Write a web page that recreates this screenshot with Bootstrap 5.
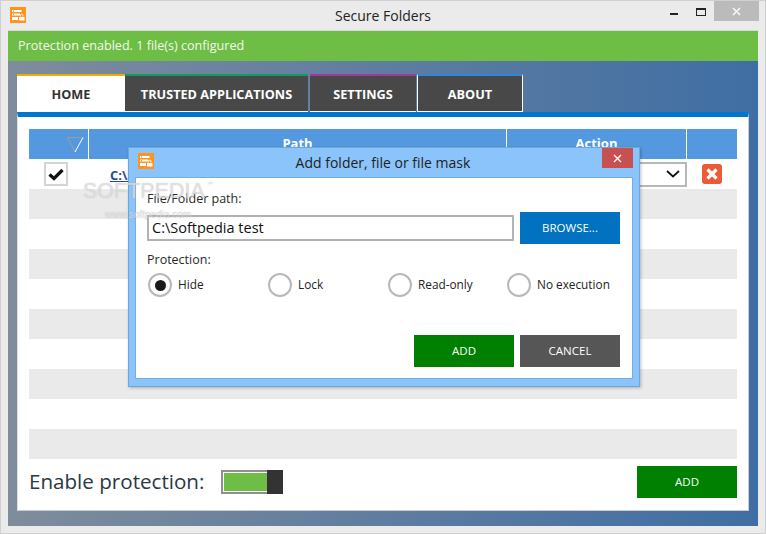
<!DOCTYPE html>
<html lang="en">
<head>
<meta charset="utf-8">
<title>Secure Folders</title>
<link href="https://cdn.jsdelivr.net/npm/bootstrap@5.3.0/dist/css/bootstrap.min.css" rel="stylesheet">
<style>
html,body{margin:0;padding:0;width:766px;height:534px;overflow:hidden;background:#ebebeb;}
body{font-family:"Open Sans","Noto Sans",sans-serif;color:#222;}
.app-window{position:relative;width:766px;height:534px;background:#ebebeb;border:1px solid #d0d0d0;}
.title-row{height:29px;position:relative;padding:6px 0 0 9px;}
.app-logo{width:16px;height:16px;display:block;}
.win-title{position:absolute;left:0;right:0;top:5px;text-align:center;font-size:14px;line-height:20px;color:#222;}
.win-ctrl{position:absolute;top:0;right:6px;height:20px;}
.ctrl-min{width:8px;height:2px;background:#222;margin-top:12px;margin-right:18px;}
.ctrl-max{width:10px;height:8px;border:1px solid #222;border-top-width:2px;margin-top:7px;margin-right:8px;}
.ctrl-close{width:45px;height:20px;background:#bbb;}
.main-pane{margin-left:7px;width:750px;height:496px;display:flex;flex-direction:column;background:linear-gradient(90deg,#7f8c9c 0%,#3f6ea4 100%);border-top:1px solid #d8d8d8;}
.status-bar{height:30px;flex:none;background:#6ebd44;color:#f2f8ee;font-size:12.6px;line-height:30px;padding-left:10px;}
.tabs-row{margin:13px 0 0 9px;height:38px;flex:none;}
.tab-item{height:38px;background:#484848;color:#fff;font-weight:700;font-size:12.7px;text-align:center;line-height:36px;border-top:2px solid;}
.tab-home{width:108px;background:#fff;color:#333;border-top-color:#f0ac00;}
.tab-trusted{width:183px;border-top-color:#109b62;border-bottom:1px solid #fff;}
.tab-settings{width:106px;margin-left:2px;border-top-color:#a0399a;border-bottom:1px solid #fff;}
.tab-about{width:106px;margin-left:1px;border:1px solid #fff;border-top:2px solid #2c87e0;}
.content-pane{margin-left:9px;width:732px;height:399px;flex:none;background:#fff;border-top:5px solid #0076cc;border-right:1px solid #ccc;border-bottom:1px solid #ccc;border-left:1px solid #ddd;padding:12px 11px 0 11px;display:flex;flex-direction:column;}
.file-table{table-layout:fixed;width:708px;margin:0;border-collapse:separate;border-spacing:0;}
.file-table th,.file-table td{height:30px;padding:0;border:0;vertical-align:middle;}
.file-table th{background:#5499e0;color:#fff;text-align:center;font-size:13px;font-weight:700;border-right:1px solid #fff;}
.file-table th:last-child{border-right:0;}
.file-table tr.band td{background:#eaeaea;}
.chk-box{width:24px;height:24px;border:2px solid #d4d4d4;display:flex;align-items:center;justify-content:center;margin-left:15px;}
.path-link{color:#2b4a9c;font-weight:700;font-size:13px;text-decoration:underline;margin-left:21px;}
.act-select{height:25px;border:2px solid #b8b8b8;display:flex;align-items:center;justify-content:flex-end;padding-right:5px;}
.del-btn{width:20px;height:20px;background:#ea5b38;border-radius:3px;display:flex;align-items:center;justify-content:center;margin:0 0 0 15px;}
.foot-row{height:32px;margin-top:7px;}
.enable-label{font-size:20.6px;color:#2c3744;line-height:32px;margin-top:-2px;}
.toggle-box{width:62px;height:24px;margin-left:17px;display:flex;background:#fff;border:2px solid #909090;border-right:0;padding:1px 0 1px 1px;}
.toggle-fill{flex:1;background:#6ebd44;}
.toggle-knob{width:16px;height:24px;background:#333;margin:-3px 0;}
.act-btn{border-radius:0;border:0;color:#fff;font-size:11.5px;width:100px;height:32px;padding:0;line-height:32px;text-align:center;flex:none;}
.btn-green,.btn-green:hover{background:#008000;color:#fff;}
.btn-gray,.btn-gray:hover{background:#565656;color:#fff;}
.btn-blue,.btn-blue:hover{background:#0072bf;color:#fff;}
.wm-big,.wm-small{position:absolute;pointer-events:none;font-family:"Liberation Sans",sans-serif;color:rgba(255,255,255,.55);z-index:5;text-shadow:0 0 1px rgba(150,150,150,.7);line-height:1;}
.wm-big{left:82px;top:180px;font-size:21.500px;}
.wm-mark{font-size:6px;vertical-align:top;margin-left:2px;}
.wm-small{left:104px;top:209px;font-size:10px;}
.dlg{position:absolute;left:127px;top:146px;width:512px;height:240px;background:#8ac4fb;border:1px solid #6fa6d8;box-shadow:1px 1px 3px rgba(0,0,0,.25);display:flex;flex-direction:column;}
.dlg-head{height:29px;flex:none;position:relative;}
.dlg-head .app-logo{position:absolute;left:9px;top:5px;}
.dlg-title{text-align:center;font-size:14px;line-height:29px;color:#222;padding-right:2px;}
.dlg-close{position:absolute;right:6px;top:0;width:31px;height:20px;background:#c75050;display:flex;align-items:center;justify-content:center;}
.dlg-body{margin:0 6px;height:202px;flex:none;background:#fff;border:1px solid #78aede;padding:12px 12px 0 11px;display:flex;flex-direction:column;}
.dlg-label{font-size:12.5px;line-height:18px;color:#2a2a2a;}
.dlg-label.second{margin-top:7px;}
.path-row{gap:6px;}
.path-input{flex:1;height:26px;border:2px solid #b2b2b2;font-size:14.5px;line-height:22px;padding:0 0 0 3px;color:#111;}
.radio-row{margin-top:4px;padding-left:1px;}
.radio-opt{flex:none;width:120px;font-size:11.8px;color:#222;}
.radio-opt.wide{width:119px;}
.radio-ring{width:24px;height:24px;border:2px solid #b8b8b8;border-radius:50%;margin-right:6px;display:flex;align-items:center;justify-content:center;flex:none;}
.radio-dot{width:11px;height:11px;background:#1a1a1a;border-radius:50%;}
.dlg-actions{margin-top:auto;margin-bottom:11px;gap:6px;}
</style>
</head>
<body>
<svg width="0" height="0" class="position-absolute"><defs>
<symbol id="logo" viewBox="0 0 16 16"><rect width="16" height="16" fill="#ff931e"/><path d="M2 3h9.500v2H2zM2 6.500h8v2H2zM2 10h6v3H2z" fill="#fff"/><path d="M9 10h5.500v3.500H9z" fill="#fff"/><path d="M10.500 9.500V8.300a1.200 1.200 0 0 1 2.400 0v1.200" fill="none" stroke="#fff" stroke-width="1"/><circle cx="3.500" cy="4" r=".7" fill="#ff931e"/><circle cx="3.500" cy="7.500" r=".7" fill="#ff931e"/></symbol>
</defs></svg>
<div class="app-window">
  <div class="title-row">
    <svg class="app-logo"><use href="#logo"/></svg>
    <div class="win-title">Secure Folders</div>
    <div class="win-ctrl d-flex align-items-start">
      <div class="ctrl-min"></div>
      <div class="ctrl-max"></div>
      <div class="ctrl-close d-flex align-items-center justify-content-center"><svg width="9" height="9" viewBox="0 0 9 9"><path d="M1 1l7 7M8 1l-7 7" stroke="#fff" stroke-width="1.300"/></svg></div>
    </div>
  </div>
  <div class="main-pane">
    <div class="status-bar">Protection enabled. 1 file(s) configured</div>
    <div class="tabs-row d-flex">
      <div class="tab-item tab-home">HOME</div>
      <div class="tab-item tab-trusted">TRUSTED APPLICATIONS</div>
      <div class="tab-item tab-settings">SETTINGS</div>
      <div class="tab-item tab-about">ABOUT</div>
    </div>
    <div class="content-pane">
      <table class="file-table">
        <colgroup><col style="width:60px"><col style="width:418px"><col style="width:180px"><col style="width:50px"></colgroup>
        <thead><tr>
          <th class="text-end"><svg class="me-1" width="18" height="18" viewBox="0 0 18 18"><path d="M1.500 1.500H17" fill="none" stroke="#9c9c9c" stroke-width="1"/><path d="M1.500 1.500L9 16" fill="none" stroke="#9c9c9c" stroke-width="1"/><path d="M17 1.500L9 16" fill="none" stroke="#fff" stroke-width="1"/></svg></th>
          <th>Path</th><th>Action</th><th></th>
        </tr></thead>
        <tbody>
          <tr><td><div class="chk-box"><svg width="16" height="13" viewBox="0 0 16 13"><path d="M1.500 6.500L6 10.500L14.500 2" fill="none" stroke="#111" stroke-width="3.200"/></svg></div></td>
            <td><a class="path-link" href="#">C:\Softpedia test</a></td>
            <td><div class="act-select"><svg width="14" height="8" viewBox="0 0 14 8"><path d="M1 1l6 5.500L13 1" fill="none" stroke="#111" stroke-width="1.700"/></svg></div></td>
            <td><div class="del-btn"><svg width="14" height="14" viewBox="0 0 14 14"><path d="M2.500 2.500l9 9M11.500 2.500l-9 9" stroke="#fff" stroke-width="3.200"/></svg></div></td></tr>
          <tr class="band"><td colspan="4"></td></tr>
          <tr><td colspan="4"></td></tr>
          <tr class="band"><td colspan="4"></td></tr>
          <tr><td colspan="4"></td></tr>
          <tr class="band"><td colspan="4"></td></tr>
          <tr><td colspan="4"></td></tr>
          <tr class="band"><td colspan="4"></td></tr>
          <tr><td colspan="4"></td></tr>
          <tr class="band"><td colspan="4"></td></tr>
        </tbody>
      </table>
      <div class="foot-row d-flex align-items-center">
        <span class="enable-label">Enable protection:</span>
        <div class="toggle-box"><div class="toggle-fill"></div><div class="toggle-knob"></div></div>
        <button type="button" class="btn act-btn btn-green ms-auto">ADD</button>
      </div>
    </div>
  </div>
  <div class="dlg">
    <div class="dlg-head">
      <svg class="app-logo"><use href="#logo"/></svg>
      <div class="dlg-title">Add folder, file or file mask</div>
      <div class="dlg-close"><svg width="9" height="9" viewBox="0 0 9 9"><path d="M1 1l7 7M8 1l-7 7" stroke="#fff" stroke-width="1.300"/></svg></div>
    </div>
    <div class="dlg-body">
      <div class="dlg-label">File/Folder path:</div>
      <div class="path-row d-flex align-items-center mt-1">
        <div class="path-input">C:\Softpedia test</div>
        <button type="button" class="btn act-btn btn-blue">BROWSE...</button>
      </div>
      <div class="dlg-label second">Protection:</div>
      <div class="radio-row d-flex">
        <div class="radio-opt d-flex align-items-center"><span class="radio-ring"><span class="radio-dot"></span></span>Hide</div>
        <div class="radio-opt d-flex align-items-center"><span class="radio-ring"></span>Lock</div>
        <div class="radio-opt wide d-flex align-items-center"><span class="radio-ring"></span>Read-only</div>
        <div class="radio-opt d-flex align-items-center"><span class="radio-ring"></span>No execution</div>
      </div>
      <div class="dlg-actions d-flex justify-content-end">
        <button type="button" class="btn act-btn btn-green">ADD</button>
        <button type="button" class="btn act-btn btn-gray">CANCEL</button>
      </div>
    </div>
  </div>
  <div class="wm-big">SOFTPEDIA<span class="wm-mark">™</span></div>
  <div class="wm-small">www.softpedia.com</div>
</div>
<script src="https://cdn.jsdelivr.net/npm/bootstrap@5.3.0/dist/js/bootstrap.bundle.min.js"></script>
</body>
</html>
